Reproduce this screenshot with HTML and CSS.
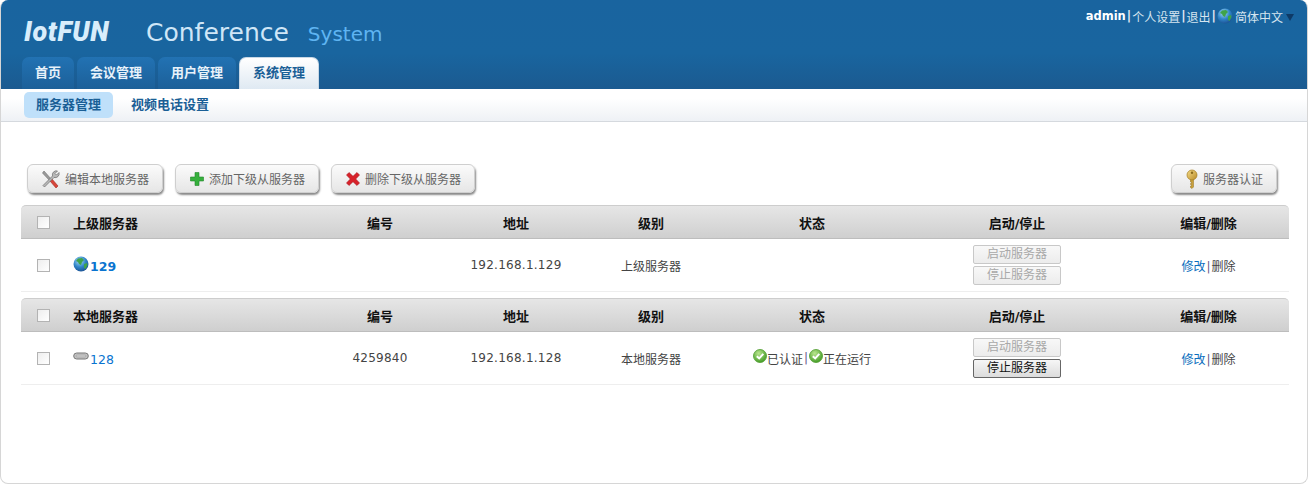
FILE: index.html
```html
<!DOCTYPE html>
<html>
<head>
    <meta charset="UTF-8">
    <title>IotFUN Conference System</title>
    <link rel="stylesheet" href="styles.css">
</head>
<body>
    <svg class="icon-defs" width="0" height="0">
        <defs>
            <radialGradient id="globe-fill" cx="40%" cy="30%" r="75%">
                <stop offset="0" stop-color="#a8dcf5"/>
                <stop offset="0.55" stop-color="#2f84c8"/>
                <stop offset="1" stop-color="#1c4f90"/>
            </radialGradient>
            <radialGradient id="check-fill" cx="40%" cy="30%" r="75%">
                <stop offset="0" stop-color="#b9e58e"/>
                <stop offset="1" stop-color="#3f9a22"/>
            </radialGradient>
            <linearGradient id="key-fill" x1="0" y1="0" x2="1" y2="1">
                <stop offset="0" stop-color="#f6dd8a"/>
                <stop offset="1" stop-color="#b98a25"/>
            </linearGradient>
            <symbol id="i-globe" viewBox="0 0 16 16">
                <circle cx="8" cy="8" r="7.5" fill="url(#globe-fill)"/>
                <path d="M5 2.5 9 2l2 2-2 2-1 3-2-1-1-2-2-1zM11 8l3-1 .5 2-2 4-1.500-1z" fill="#3fa34a"/>
            </symbol>
            <symbol id="i-check" viewBox="0 0 14 14">
                <circle cx="7" cy="7" r="6.500" fill="url(#check-fill)" stroke="#4c9a2c" stroke-width="0.8"/>
                <path d="M3.800 7.200 6.200 9.400 10.300 4.900" fill="none" stroke="#fff" stroke-width="2"/>
            </symbol>
        </defs>
    </svg>

    <div class="shell">
        <div class="header">
            <div class="header-top">
                <div class="brand">
                    <span class="logo">IotFUN</span>
                    <span class="brand-name">Conference</span>
                    <span class="brand-sub">System</span>
                </div>
                <div class="user-links">
                    <b>admin</b><span class="sep">|</span><span>个人设置</span><span class="sep">|</span><span>退出</span><span class="sep">|</span>
                    <svg class="icon-globe-sm" width="16" height="16"><use href="#i-globe"/></svg>
                    <span class="lang">简体中文</span>
                    <span class="caret"></span>
                </div>
            </div>
            <div class="tabs">
                <div class="tab">首页</div>
                <div class="tab">会议管理</div>
                <div class="tab">用户管理</div>
                <div class="tab active">系统管理</div>
            </div>
        </div>

        <div class="subnav">
            <div class="subnav-item active">服务器管理</div>
            <div class="subnav-item">视频电话设置</div>
        </div>

        <div class="content">
            <div class="toolbar">
                <div class="toolbar-left">
                    <div class="tool-btn">
                        <svg width="20" height="20" viewBox="0 0 20 20">
                            <path d="M3 2 11 11 9.500 12.500 1.500 4z" fill="#9a9a9a" stroke="#6d6d6d" stroke-width="0.6"/>
                            <path d="M11 10 17 17 15 19 9 12z" fill="#d8453a" stroke="#a32a22" stroke-width="0.6"/>
                            <path d="M18 3.500 15.500 6 14 4.500 16.500 2A4 4 0 0 0 11.500 7L2 16.500 3.500 18 13 8.500A4 4 0 0 0 18 3.500z" fill="#b8b8b8" stroke="#6d6d6d" stroke-width="0.7"/>
                        </svg>
                        <span>编辑本地服务器</span>
                    </div>
                    <div class="tool-btn">
                        <svg width="16" height="16" viewBox="0 0 16 16">
                            <path d="M6 1.500h4V6h4.500v4H10v4.500H6V10H1.500V6H6z" fill="#36b03c" stroke="#23862b" stroke-width="0.6"/>
                        </svg>
                        <span>添加下级从服务器</span>
                    </div>
                    <div class="tool-btn">
                        <svg width="16" height="16" viewBox="0 0 16 16">
                            <path d="M4 1.500 8 5.300 12 1.500 14.500 4 10.700 8 14.500 12 12 14.500 8 10.700 4 14.500 1.500 12 5.300 8 1.500 4z" fill="#d8222a" stroke="#a8181e" stroke-width="0.6"/>
                        </svg>
                        <span>删除下级从服务器</span>
                    </div>
                </div>
                <div class="tool-btn">
                    <svg width="14" height="20" viewBox="0 0 14 20">
                        <path d="M5.500 10h3v8l-1.500 1.500-1.500-1v-1.500h1v-1.500h-1v-1h1v-1.500h-1z" fill="#c9a03a" stroke="#94701c" stroke-width="0.5"/>
                        <circle cx="7" cy="6" r="5" fill="url(#key-fill)" stroke="#a37c20" stroke-width="0.7"/>
                        <circle cx="7" cy="3.800" r="1.200" fill="#8a6a1c"/>
                    </svg>
                    <span>服务器认证</span>
                </div>
            </div>

            <table class="server-table">
                <colgroup>
                    <col class="col-check"><col class="col-name"><col class="col-no"><col class="col-addr">
                    <col class="col-level"><col class="col-status"><col class="col-action"><col class="col-edit">
                </colgroup>
                <tr>
                    <th><input type="checkbox" class="check"></th>
                    <th class="left">上级服务器</th>
                    <th>编号</th>
                    <th>地址</th>
                    <th>级别</th>
                    <th>状态</th>
                    <th>启动/停止</th>
                    <th>编辑/删除</th>
                </tr>
                <tr>
                    <td><input type="checkbox" class="check"></td>
                    <td class="left">
                        <div class="server-name">
                            <svg width="16" height="16"><use href="#i-globe"/></svg>
                            <a class="server-link bold">129</a>
                        </div>
                    </td>
                    <td></td>
                    <td class="num">192.168.1.129</td>
                    <td>上级服务器</td>
                    <td></td>
                    <td>
                        <div class="action-stack">
                            <div class="mini-btn disabled">启动服务器</div>
                            <div class="mini-btn disabled">停止服务器</div>
                        </div>
                    </td>
                    <td><a class="edit-link">修改</a><span class="sep">|</span>删除</td>
                </tr>
            </table>

            <table class="server-table">
                <colgroup>
                    <col class="col-check"><col class="col-name"><col class="col-no"><col class="col-addr">
                    <col class="col-level"><col class="col-status"><col class="col-action"><col class="col-edit">
                </colgroup>
                <tr>
                    <th><input type="checkbox" class="check"></th>
                    <th class="left">本地服务器</th>
                    <th>编号</th>
                    <th>地址</th>
                    <th>级别</th>
                    <th>状态</th>
                    <th>启动/停止</th>
                    <th>编辑/删除</th>
                </tr>
                <tr>
                    <td><input type="checkbox" class="check"></td>
                    <td class="left">
                        <div class="server-name">
                            <svg width="16" height="16" viewBox="0 0 16 16">
                                <rect x="0.700" y="4" width="14.600" height="6" rx="3" fill="#c4c4c4" stroke="#777" stroke-width="1"/>
                                <rect x="3" y="6.200" width="10" height="1.600" rx="0.800" fill="#f4f4f4" stroke="#777" stroke-width="0.500"/>
                            </svg>
                            <a class="server-link">128</a>
                        </div>
                    </td>
                    <td class="num">4259840</td>
                    <td class="num">192.168.1.128</td>
                    <td>本地服务器</td>
                    <td>
                        <div class="status">
                            <svg width="14" height="14"><use href="#i-check"/></svg><span>已认证</span><span class="sep">|</span><svg width="14" height="14"><use href="#i-check"/></svg><span>正在运行</span>
                        </div>
                    </td>
                    <td>
                        <div class="action-stack">
                            <div class="mini-btn disabled">启动服务器</div>
                            <div class="mini-btn">停止服务器</div>
                        </div>
                    </td>
                    <td><a class="edit-link">修改</a><span class="sep">|</span>删除</td>
                </tr>
            </table>
        </div>
    </div>
</body>
</html>
```

FILE: styles.css
```css
html, body {
    margin: 0;
    padding: 0;
    background: #fff;
}

body {
    font-family: 'DejaVu Sans', 'Noto Sans CJK SC', sans-serif;
    font-size: 12px;
    color: #444;
}

.icon-defs {
    position: absolute;
}

.shell {
    box-sizing: border-box;
    height: 484px;
    border: 1px solid #d6d6d6;
    border-top: 0;
    border-radius: 8px;
    overflow: hidden;
}

/* header */
.header {
    height: 89px;
    background: linear-gradient(180deg, #19649f 0%, #19659f 60%, #1b5a90 100%);
    display: flex;
    flex-direction: column;
}

.header-top {
    height: 57px;
    display: flex;
    justify-content: space-between;
    align-items: flex-start;
}

.brand {
    display: flex;
    align-items: baseline;
    padding: 14px 0 0 23px;
}

.logo {
    font-family: Roboto, sans-serif;
    font-weight: 900;
    font-style: italic;
    font-size: 27px;
    line-height: 36px;
    letter-spacing: 0.6px;
    color: #d8edfb;
    width: 122px;
}

.brand-name {
    font-size: 25px;
    line-height: 36px;
    color: #cfe6f7;
}

.brand-sub {
    font-size: 20px;
    line-height: 36px;
    color: #5fb4f2;
    margin-left: 19px;
}

.user-links {
    display: flex;
    align-items: center;
    padding: 8px 13px 0 0;
    color: #d5e5f0;
    height: 16px;
}

.user-links b {
    color: #fff;
    font-size: 11.500px;
}

.sep {
    color: #6a5a8a;
    margin: 0 1px;
}

.user-links .sep {
    color: #e8eaf4;
    font-weight: bold;
}

.icon-globe-sm {
    margin-right: 2px;
}

.caret {
    width: 0;
    height: 0;
    margin: 2px 0 0 3px;
    border-left: 4px solid transparent;
    border-right: 4px solid transparent;
    border-top: 7px solid #0e3a66;
}

.tabs {
    display: flex;
    gap: 3px;
    padding-left: 21px;
    height: 32px;
}

.tab {
    padding: 0 13px;
    font-size: 13px;
    font-weight: bold;
    line-height: 32px;
    color: #e8f2fa;
    border-radius: 7px 7px 0 0;
    background: linear-gradient(180deg, #2272b3 0%, #1c6099 100%);
}

.tab.active {
    box-sizing: border-box;
    color: #1a5f96;
    line-height: 30px;
    border: 1px solid #c8d8e6;
    border-bottom: 0;
    padding: 0 13px;
    background: linear-gradient(180deg, #ffffff 0%, #dfe9f2 100%);
}

/* second level nav */
.subnav {
    box-sizing: border-box;
    height: 33px;
    display: flex;
    gap: 6px;
    padding: 3px 0 0 23px;
    background: linear-gradient(180deg, #ffffff 30%, #eef1f5 100%);
    border-bottom: 1px solid #d5d9de;
}

.subnav-item {
    height: 26px;
    padding: 0 12px;
    font-size: 13px;
    font-weight: bold;
    line-height: 26px;
    color: #1a5f96;
    border-radius: 5px;
}

.subnav-item.active {
    background: #bfe0fa;
}

/* main */
.content {
    padding: 42px 18px 0 20px;
}

.toolbar {
    display: flex;
    justify-content: space-between;
    padding: 0 12px 12px 6px;
}

.toolbar-left {
    display: flex;
    gap: 12px;
}

.tool-btn {
    box-sizing: border-box;
    height: 29px;
    padding: 0 13px;
    display: flex;
    align-items: center;
    justify-content: center;
    gap: 4px;
    color: #666;
    border: 1px solid #cfcfcf;
    border-radius: 6px;
    background: linear-gradient(180deg, #fbfbfb 0%, #e6e6e6 100%);
    box-shadow: 1px 2px 2px #8a8a8a;
}

.server-table {
    width: 100%;
    border-collapse: separate;
    border-spacing: 0;
    table-layout: fixed;
    margin-bottom: 6px;
}

.col-check { width: 52px; }
.col-name { width: 239px; }
.col-no { width: 136px; }
.col-addr { width: 136px; }
.col-level { width: 134px; }
.col-status { width: 188px; }
.col-action { width: 222px; }

.server-table th {
    height: 32px;
    padding: 0;
    font-size: 13px;
    color: #111;
    text-align: center;
    background: linear-gradient(180deg, #e6e6e6 0%, #cfcfcf 100%);
    border-top: 1px solid #cdcdcd;
    border-bottom: 1px solid #bdbdbd;
}

.server-table th:first-child {
    border-top-left-radius: 5px;
}

.server-table th:last-child {
    border-top-right-radius: 5px;
}

.server-table td {
    height: 52px;
    padding: 0;
    text-align: center;
    color: #444;
    border-bottom: 1px solid #eeeeee;
}

.server-table .left {
    text-align: left;
}

.num {
    letter-spacing: 0.250px;
}

.check {
    appearance: none;
    box-sizing: border-box;
    display: block;
    width: 13px;
    height: 13px;
    margin: 0 0 0 16px;
    border: 1px solid #b3b3b3;
    background: linear-gradient(135deg, #eeeeee, #ffffff);
}

.server-name {
    display: flex;
    align-items: flex-start;
}

.server-link {
    margin: 3px 0 0 1px;
    color: #0a74d0;
    font-size: 12.500px;
}

.server-link.bold {
    font-weight: bold;
}

.status {
    display: flex;
    justify-content: center;
    align-items: center;
    height: 22px;
}

.status svg {
    margin-top: -4px;
}

.action-stack {
    display: flex;
    flex-direction: column;
    align-items: center;
    gap: 2px;
}

.mini-btn {
    box-sizing: border-box;
    width: 88px;
    height: 19px;
    line-height: 17px;
    color: #111;
    border: 1px solid #666;
    border-radius: 2px;
    background: linear-gradient(180deg, #f6f6f6 0%, #dcdcdc 100%);
}

.mini-btn.disabled {
    color: #a8a8a8;
    border-color: #c8c8c8;
    background: linear-gradient(180deg, #f8f8f8 0%, #ececec 100%);
}

.edit-link {
    color: #0a6ebd;
}
```
